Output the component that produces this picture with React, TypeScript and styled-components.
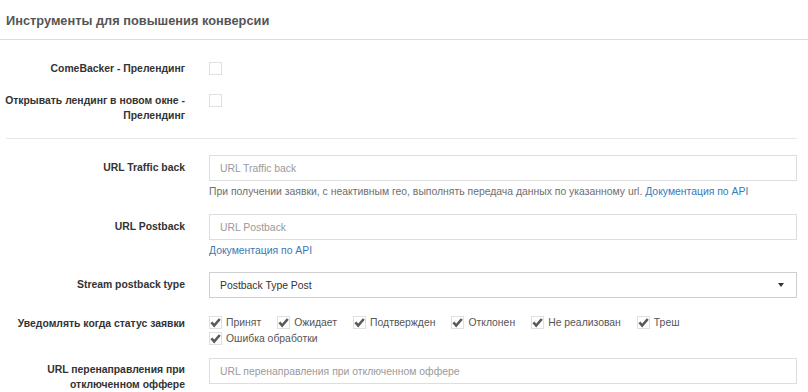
import React from "react";
import styled, { createGlobalStyle } from "styled-components";

const GlobalStyle = createGlobalStyle`
  html, body { margin: 0; padding: 0; background: #fff; }
  body { font-family: "Liberation Sans", Arial, sans-serif; color: #333; }
  * { box-sizing: border-box; }
`;

const Panel = styled.div`
  width: 808px;
  background: #fff;
`;

const Header = styled.div`
  height: 40px;
  border-bottom: 1px solid #dcdcdc;
  padding-left: 6px;
  padding-top: 1px;
  display: flex;
  align-items: center;
`;

const Title = styled.h3`
  margin: 0;
  font-size: 12.8px;
  font-weight: bold;
  color: #555;
`;

const Body = styled.div`
  padding-right: 11px;
`;

const Row = styled.div<{ $mt: number }>`
  display: grid;
  grid-template-columns: 185px 1fr;
  column-gap: 24px;
  margin-top: ${(p) => p.$mt}px;
`;

const Label = styled.label<{ $pt?: number }>`
  text-align: right;
  font-size: 10.4px;
  font-weight: bold;
  line-height: 15px;
  color: #333;
  padding-top: ${(p) => p.$pt ?? 0}px;
  white-space: nowrap;
`;

const Control = styled.div`
  display: flex;
  flex-direction: column;
  min-width: 0;
`;

const Box = styled.span<{ $mt?: number }>`
  display: inline-flex;
  align-items: center;
  justify-content: center;
  width: 13px;
  height: 13px;
  border: 1px solid #e0e0e0;
  background: #fff;
  margin-top: ${(p) => p.$mt ?? 1}px;
  flex: none;
`;

const Divider = styled.div`
  height: 1px;
  background: #e8e8e8;
  margin: 15px 0 0 6px;
`;

const Input = styled.input`
  height: 26px;
  width: 100%;
  border: 1px solid #dedede;
  padding: 0 10px;
  font-family: "Liberation Sans", Arial, sans-serif;
  font-size: 10.4px;
  color: #333;
  outline: none;
  &::placeholder { color: #9a9a9a; }
`;

const Help = styled.div`
  margin-top: 3px;
  font-size: 10.4px;
  line-height: 15px;
  color: #6e6e6e;
  white-space: nowrap;
`;

const Link = styled.a`
  color: #3a78b5;
  text-decoration: none;
`;

const Select = styled.div`
  height: 26px;
  border: 1px solid #cfcfcf;
  padding: 0 10px;
  display: flex;
  align-items: center;
  justify-content: space-between;
  font-size: 10.4px;
  color: #333;
`;

const Caret = styled.span`
  width: 0;
  height: 0;
  border-left: 3.5px solid transparent;
  border-right: 3.5px solid transparent;
  border-top: 4px solid #333;
  margin-right: 2px;
`;

const Checks = styled.div`
  display: flex;
  flex-wrap: wrap;
  column-gap: 16px;
`;

const CheckItem = styled.label`
  display: flex;
  align-items: flex-start;
  gap: 4px;
  font-size: 10.4px;
  line-height: 16px;
  color: #555;
`;

const Check = () => (
  <Box $mt={1}>
    <svg width="11" height="11" viewBox="0 0 11 11">
      <path d="M1.4 5.4 L4.2 8.6 L9.8 2" fill="none" stroke="#5a5a5a" strokeWidth="2.6" strokeLinejoin="miter" strokeLinecap="butt" />
    </svg>
  </Box>
);

const statuses = ["Принят", "Ожидает", "Подтвержден", "Отклонен", "Не реализован", "Треш", "Ошибка обработки"];

export default function App() {
  return (
    <Panel>
      <GlobalStyle />
      <Header>
        <Title>Инструменты для повышения конверсии</Title>
      </Header>
      <Body>
        <Row $mt={21}>
          <Label>ComeBacker - Прелендинг</Label>
          <Control>
            <Box />
          </Control>
        </Row>
        <Row $mt={17}>
          <Label>
            Открывать лендинг в новом окне -<br />Прелендинг
          </Label>
          <Control>
            <Box />
          </Control>
        </Row>
        <Divider />
        <Row $mt={16}>
          <Label $pt={5}>URL Traffic back</Label>
          <Control>
            <Input placeholder="URL Traffic back" />
            <Help>
              При получении заявки, с неактивным гео, выполнять передача данных по указанному url.{" "}
              <Link href="#">Документация по API</Link>
            </Help>
          </Control>
        </Row>
        <Row $mt={15}>
          <Label $pt={5}>URL Postback</Label>
          <Control>
            <Input placeholder="URL Postback" />
            <Help>
              <Link href="#">Документация по API</Link>
            </Help>
          </Control>
        </Row>
        <Row $mt={14}>
          <Label $pt={5}>Stream postback type</Label>
          <Control>
            <Select>
              <span>Postback Type Post</span>
              <Caret />
            </Select>
          </Control>
        </Row>
        <Row $mt={17}>
          <Label $pt={1}>Уведомлять когда статус заявки</Label>
          <Control>
            <Checks>
              {statuses.map((s) => (
                <CheckItem key={s}>
                  <Check />
                  {s}
                </CheckItem>
              ))}
            </Checks>
          </Control>
        </Row>
        <Row $mt={11}>
          <Label $pt={4}>
            URL перенаправления при<br />отключенном оффере
          </Label>
          <Control>
            <Input placeholder="URL перенаправления при отключенном оффере" />
          </Control>
        </Row>
      </Body>
    </Panel>
  );
}
